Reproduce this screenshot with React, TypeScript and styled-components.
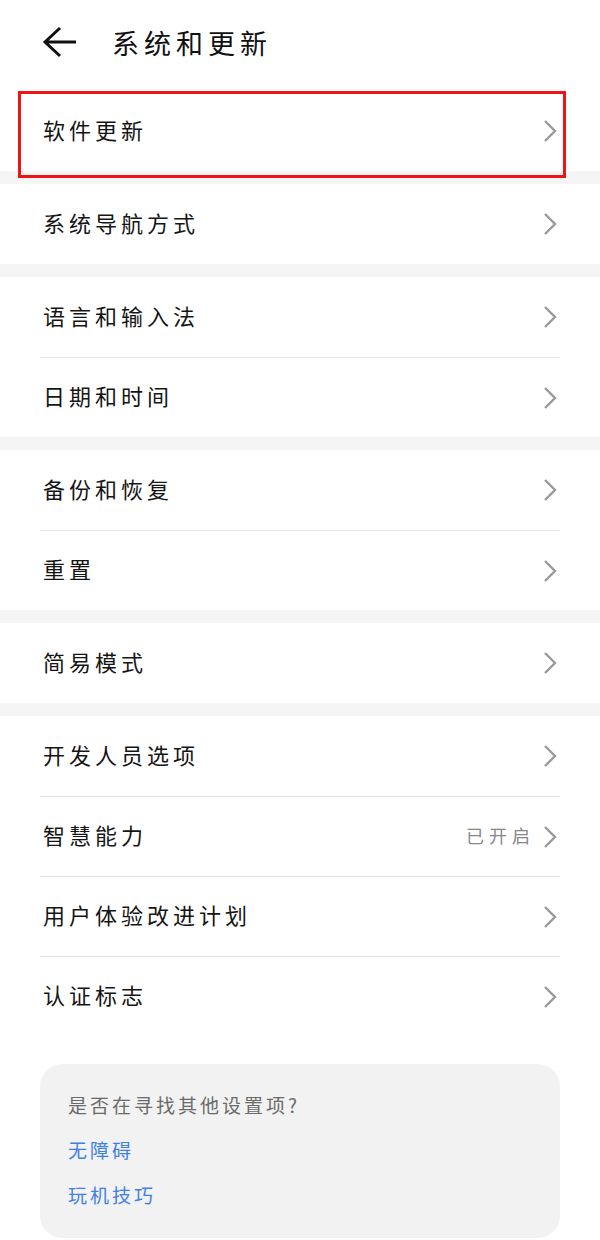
import React from "react";
import styled, { createGlobalStyle } from "styled-components";

const GlobalStyle = createGlobalStyle`
  html, body {
    margin: 0;
    padding: 0;
    background: #ffffff;
  }
  body {
    font-family: "Noto Sans CJK SC", "Noto Sans", sans-serif;
    color: #111;
  }
`;

const Page = styled.div`
  width: 600px;
  min-height: 1240px;
  background: #ffffff;
`;

const Header = styled.div`
  display: flex;
  align-items: center;
  height: 91px;
  padding-left: 42px;
  box-sizing: border-box;
`;

const BackButton = styled.div`
  display: flex;
  width: 36px;
  height: 36px;
  margin-right: 34px;
  margin-top: -3px;
`;

const Title = styled.h1`
  margin: 0;
  margin-top: -6px;
  font-size: 27px;
  font-weight: 400;
  letter-spacing: 5px;
  color: #111;
`;

const Section = styled.div<{ $last?: boolean }>`
  background: #fff;
  border-bottom: ${(p) => (p.$last ? "none" : "13px solid #f5f5f5")};
`;

const RowWrap = styled.div`
  position: relative;
`;

const Row = styled.div<{ $divider?: boolean }>`
  display: flex;
  align-items: center;
  height: 80px;
  margin: 0 40px;
  box-sizing: border-box;
  border-top: ${(p) => (p.$divider ? "1.5px solid #e4e4e4" : "none")};
`;

const RowLabel = styled.span`
  flex: 1;
  padding-left: 3px;
  padding-bottom: 5px;
  font-size: 22px;
  letter-spacing: 4px;
  color: #151515;
`;

const RowValue = styled.span`
  padding-bottom: 4px;
  font-size: 18px;
  letter-spacing: 5px;
  color: #888;
  margin-right: 8px;
`;

const Chevron = styled.svg`
  width: 14px;
  height: 24px;
  margin-right: 3px;
`;

const Highlight = styled.div`
  position: absolute;
  left: 18px;
  top: 0;
  width: 548px;
  height: 87px;
  border: 3px solid #f21212;
  box-sizing: border-box;
  pointer-events: none;
`;

const HintCard = styled.div`
  margin: 28px 40px 0;
  background: #f2f2f2;
  border-radius: 22px;
  padding: 27px 28px 20px;
  height: 174px;
  box-sizing: border-box;
  display: flex;
  flex-direction: column;
  gap: 18px;
`;

const HintTitle = styled.div`
  font-size: 19px;
  letter-spacing: 3px;
  color: #6a6a6a;
`;

const HintLink = styled.div`
  font-size: 19px;
  letter-spacing: 3px;
  color: #3f7fe6;
`;

const ChevronIcon = () => (
  <Chevron viewBox="0 0 14 24">
    <polyline points="2,2 12,12 2,22" fill="none" stroke="#999" strokeWidth="2.4" />
  </Chevron>
);

type Item = { label: string; value?: string };

const sections: Item[][] = [
  [{ label: "系统导航方式" }],
  [{ label: "语言和输入法" }, { label: "日期和时间" }],
  [{ label: "备份和恢复" }, { label: "重置" }],
  [{ label: "简易模式" }],
  [
    { label: "开发人员选项" },
    { label: "智慧能力", value: "已开启" },
    { label: "用户体验改进计划" },
    { label: "认证标志" },
  ],
];

const App: React.FC = () => {
  return (
    <Page>
      <GlobalStyle />
      <Header>
        <BackButton>
          <svg width="36" height="36" viewBox="0 0 36 36">
            <path d="M34 16 H4 M18 2 L3 16 L18 30" fill="none" stroke="#111" strokeWidth="3" />
          </svg>
        </BackButton>
        <Title>系统和更新</Title>
      </Header>

      <Section>
        <RowWrap>
          <Row>
            <RowLabel>软件更新</RowLabel>
            <ChevronIcon />
          </Row>
          <Highlight />
        </RowWrap>
      </Section>

      {sections.map((items, si) => (
        <Section key={si} $last={si === sections.length - 1}>
          {items.map((item, i) => (
            <Row key={item.label} $divider={i > 0}>
              <RowLabel>{item.label}</RowLabel>
              {item.value && <RowValue>{item.value}</RowValue>}
              <ChevronIcon />
            </Row>
          ))}
        </Section>
      ))}

      <HintCard>
        <HintTitle>是否在寻找其他设置项?</HintTitle>
        <HintLink>无障碍</HintLink>
        <HintLink>玩机技巧</HintLink>
      </HintCard>
    </Page>
  );
};

export default App;
